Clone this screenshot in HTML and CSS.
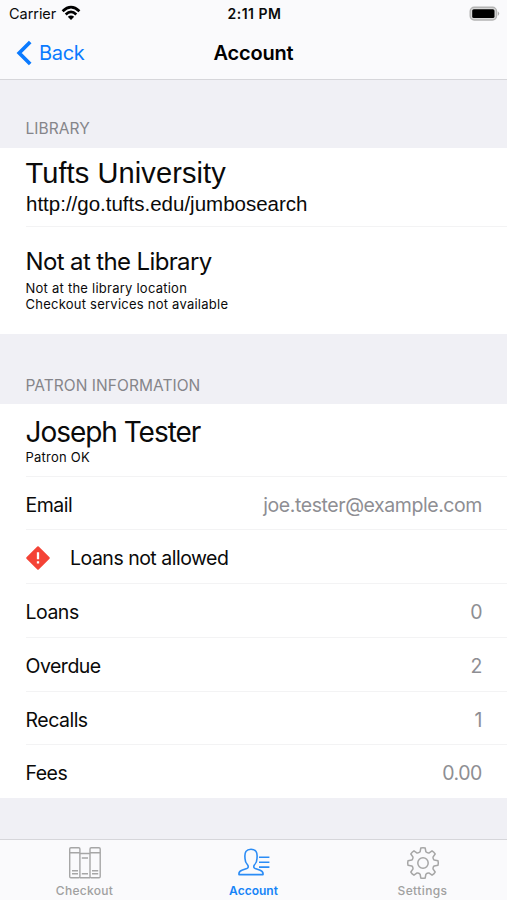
FILE: index.html
```
<!DOCTYPE html>
<html lang="en">
<head>
<meta charset="utf-8">
<title>Account</title>
<link rel="stylesheet" href="styles.css">
</head>
<body>
<div class="app">
  <header class="top">
    <div class="status">
      <div class="carrier"><span>Carrier</span>
        <svg class="wifi" width="20" height="16" viewBox="0 0 20 16" fill="none" stroke="#000" stroke-width="2.7"><path d="M1.6 6.2Q10-1.8 18.4 6.2"/><path d="M4.7 9.4Q10 4.4 15.3 9.4"/><path d="M10 15L6.8 11.8Q10 9.2 13.2 11.8Z" fill="#000" stroke="none"/></svg>
      </div>
      <span class="time">2:11 PM</span>
      <svg class="battery" width="31" height="16" viewBox="0 0 31 16"><rect x="1.2" y="1.2" width="26.3" height="12.8" rx="4" fill="#d8d8d8" stroke="#b4b4b4" stroke-width="1.4"/><rect x="3.2" y="3.2" width="22.3" height="8.8" rx="1.6" fill="#000"/><path d="M28.8 5.3Q31.6 7.6 28.8 9.9Z" fill="#aaa"/></svg>
    </div>
    <nav class="bar">
      <a class="back"><svg width="16" height="26" viewBox="0 0 16 26" fill="none" stroke="#0a7aff" stroke-width="3.7"><path d="M14.2 2L3.2 13L14.2 24"/></svg><span>Back</span></a>
      <h1>Account</h1>
      <span></span>
    </nav>
  </header>
  <main>
    <h2>LIBRARY</h2>
    <section>
      <div class="row library">
        <div class="name">Tufts University</div>
        <div class="url">http://go.tufts.edu/jumbosearch</div>
      </div>
      <div class="row place">
        <div class="heading">Not at the Library</div>
        <div class="note">Not at the library location</div>
        <div class="note">Checkout services not available</div>
      </div>
    </section>
    <h2 class="patron-title">PATRON INFORMATION</h2>
    <section>
      <div class="row patron">
        <div class="person">Joseph Tester</div>
        <div class="note">Patron OK</div>
      </div>
      <div class="row item email"><span>Email</span><span class="value">joe.tester@example.com</span></div>
      <div class="row item alert">
        <svg width="26" height="26" viewBox="0 0 26 26"><path d="M13 2.2L23.8 13L13 23.8L2.2 13Z" fill="#f44336" stroke="#f44336" stroke-width="2" stroke-linejoin="round"/><path d="M13 7.2V14.3M13 16.2V18.6" stroke="#fff" stroke-width="2.3"/></svg>
        <span>Loans not allowed</span>
      </div>
      <div class="row item"><span>Loans</span><span class="value">0</span></div>
      <div class="row item"><span>Overdue</span><span class="value">2</span></div>
      <div class="row item recalls"><span>Recalls</span><span class="value">1</span></div>
      <div class="row item fees"><span>Fees</span><span class="value">0.00</span></div>
    </section>
  </main>
  <footer class="tabs">
    <a class="tab"><svg width="34" height="34" viewBox="0 0 34 34" fill="none" stroke="#a6a6a6" stroke-width="1.4"><rect x="1.7" y="1.7" width="10.2" height="30" rx="1.2"/><rect x="22" y="1.7" width="10.2" height="30" rx="1.2"/><path d="M11.9 7.5H22M11.9 31.7H22M1.7 6.7H11.9M22 6.7H32.2M13.8 12H20M4 24.7H10M4 27.7H10M24 24.7H30.2M24 27.7H30.2M13.8 27.7H20"/></svg><span>Checkout</span></a>
    <a class="tab active"><svg width="34" height="34" viewBox="0 0 34 34" fill="none" stroke="#2b8cf5" stroke-width="1.6" stroke-linejoin="round"><path d="M2 28.6Q1.4 25.4 5.5 24L9.8 22.6Q12 21.8 10.8 19.2Q7.8 16.2 8 12Q7 3.2 14 3.2Q21 3.2 20 12Q20.2 16.2 17.2 19.2Q16 21.8 18.2 22.6L22.5 24Q26.6 25.4 26 28.6Z"/><path d="M22 11.3H32.4M22 16.3H32.4M22 21.1H32.4"/></svg><span>Account</span></a>
    <a class="tab settings"><svg width="34" height="34" viewBox="-17 -17 34 34" fill="none" stroke="#a6a6a6" stroke-width="1.5" stroke-linejoin="round"><circle r="5.2"/><path d="M-2.2-15Q0-15.6 2.2-15L2.9-11.2Q4.1-9.9 5.87-9.97L9.05-12.16Q11-11 12.16-9.05L9.97-5.87Q9.9-4.1 11.2-2.9L15-2.2Q15.6 0 15 2.2L11.2 2.9Q9.9 4.1 9.97 5.87L12.16 9.05Q11 11 9.05 12.16L5.87 9.97Q4.1 9.9 2.9 11.2L2.2 15Q0 15.6-2.2 15L-2.9 11.2Q-4.1 9.9-5.87 9.97L-9.05 12.16Q-11 11-12.16 9.05L-9.97 5.87Q-9.9 4.1-11.2 2.9L-15 2.2Q-15.6 0-15-2.2L-11.2-2.9Q-9.9-4.1-9.97-5.87L-12.16-9.05Q-11-11-9.05-12.16L-5.87-9.97Q-4.1-9.9-2.9-11.2Z"/></svg><span>Settings</span></a>
  </footer>
</div>
</body>
</html>
```

FILE: styles.css
```
* { box-sizing: border-box; }
body { margin: 0; font-family: Inter, "Liberation Sans", sans-serif; color: #0a0a0a; }
.app { height: 900px; display: flex; flex-direction: column; background: #f0f0f5; overflow: hidden; }
.top { height: 80px; background: #fafafc; border-bottom: 1px solid #d6d6da; }
.status { height: 27px; padding: 0 7px 0 9px; display: grid; grid-template-columns: 1fr auto 1fr; align-items: center; font-size: 14.5px; }
.carrier { display: flex; align-items: center; gap: 5px; letter-spacing: -.05px; }
.wifi { margin-bottom: 1px; }
.time { font-weight: 600; font-size: 14px; letter-spacing: .5px; }
.battery { justify-self: end; }
.bar { height: 52px; padding: 0 16px; display: grid; grid-template-columns: 1fr auto 1fr; align-items: center; }
.back { display: flex; align-items: center; gap: 7px; color: #0a7aff; font-size: 20px; letter-spacing: -.3px; }
h1 { margin: 0; font-size: 20px; font-weight: 600; letter-spacing: -.2px; color: #000; }
h2 { margin: 0; height: 68px; padding: 38px 25.5px 0; font-size: 15.5px; line-height: 22px; font-weight: 400; letter-spacing: .05px; color: #85858a; }
.patron-title { height: 70px; padding-top: 41px; }
section { background: #fff; padding-left: 25.5px; }
.row { border-bottom: 1px solid #f3f3f4; }
.row:last-child { border-bottom: 0; }
.library { height: 79px; padding-top: 8px; font-family: "Liberation Sans", Arial, sans-serif; }
.name { font-size: 29px; line-height: 34px; letter-spacing: .1px; }
.url { font-size: 20.5px; line-height: 28px; padding-left: .5px; }
.place { height: 107px; padding-top: 18px; }
.heading { font-size: 24px; line-height: 34px; letter-spacing: -.63px; }
.note { font-size: 13px; line-height: 16px; letter-spacing: .24px; }
.heading + .note { margin-top: 1px; }
.patron { height: 73px; padding-top: 12px; }
.person { font-size: 28px; line-height: 33px; letter-spacing: -1.03px; }
.item { height: 54px; padding-right: 25px; display: flex; align-items: center; justify-content: space-between; font-size: 19.5px; letter-spacing: -.5px; padding-top: 2px; }
.email, .recalls, .fees { height: 53px; }
.email, .recalls { padding-top: 3px; }
.value { color: #8e8e93; letter-spacing: -.43px; }
.fees { padding-top: 3px; }
.alert { justify-content: flex-start; gap: 19px; }
.alert svg { margin-left: -.5px; }
.tabs { margin-top: auto; height: 61px; background: #fafafc; border-top: 1px solid #d6d6da; display: grid; grid-template-columns: repeat(3, 1fr); }
.tab { display: flex; flex-direction: column; align-items: center; padding-top: 6px; font-size: 12px; line-height: 16px; font-weight: 500; color: #a0a0a0; gap: 3px; letter-spacing: .3px; }
.settings { letter-spacing: .4px; }
.active { color: #1583f7; font-weight: 600; letter-spacing: 0; }
```
